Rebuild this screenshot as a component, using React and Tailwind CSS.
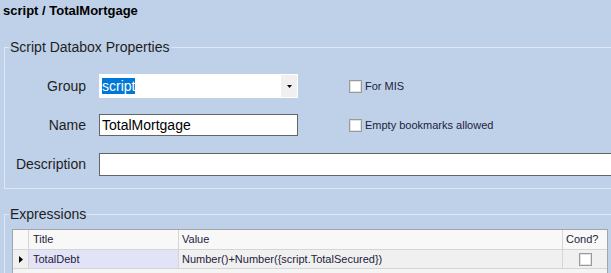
import React from 'react';

const CheckBox = () => (
    <span className="inline-block w-[13px] h-[13px] border border-[#9a9a9a] bg-white shadow-[inset_0_0_0_1px_#e2e2e2]" />
);

const App = () => {
    return (
        <div className="w-[611px] h-[273px] overflow-hidden bg-[#bfd1e9] font-['Liberation_Sans',Arial,sans-serif] text-[#1e1e1e]">
            <div className="pl-[3px] pt-[3px] text-[13px] leading-[16px] font-bold text-black">script / TotalMortgage</div>

            {/* properties group */}
            <fieldset className="mt-[20px] ml-[4px] w-[660px] border border-[#dfe7f2] pb-[12px]">
                <legend className="ml-[4px] px-[1px] text-[14px] leading-[16px]">Script Databox Properties</legend>

                <div className="mt-[19px] flex items-center h-[24px]">
                    <div className="w-[81px] text-right text-[14px]">Group</div>
                    <div className="ml-[13px] w-[199px] h-[24px] bg-white flex items-center">
                        <div className="flex-1 pl-[3px]">
                            <span className="inline-block bg-[#0078d7] text-white text-[14px] leading-[16px]">script</span>
                        </div>
                        <div className="w-[16px] h-[22px] mr-[1px] bg-[#f0f0f0] flex items-center justify-center">
                            <svg width="5" height="3" viewBox="0 0 5 3">
                                <polygon points="0,0 5,0 2.5,3" fill="#000" />
                            </svg>
                        </div>
                    </div>
                    <div className="ml-[51px] flex items-center gap-[3px] text-[11px] text-[#1c1c3c]">
                        <CheckBox />
                        <span>For MIS</span>
                    </div>
                </div>

                <div className="mt-[16px] flex items-center h-[22px]">
                    <div className="w-[81px] text-right text-[14px]">Name</div>
                    <div className="ml-[13px] w-[199px] h-[22px] bg-white border border-[#646464] pl-[2px] text-[14px] leading-[20px] text-black">
                        TotalMortgage
                    </div>
                    <div className="ml-[51px] flex items-center gap-[3px] text-[11px] text-[#1c1c3c]">
                        <CheckBox />
                        <span>Empty bookmarks allowed</span>
                    </div>
                </div>

                <div className="mt-[17px] flex items-center h-[23px]">
                    <div className="w-[81px] text-right text-[14px]">Description</div>
                    <div className="ml-[13px] flex-1 h-[23px] bg-white border border-[#646464]" />
                </div>
            </fieldset>

            {/* expressions group */}
            <fieldset className="mt-[17px] ml-[4px] w-[660px] border border-[#dfe7f2]">
                <legend className="ml-[4px] px-[1px] text-[14px] leading-[16px]">Expressions</legend>

                <div className="mt-[7px] ml-[7px] w-[596px] h-[60px] border border-[#a5a5a5] bg-[#f4f4f4] text-[11px] text-[#1c1c3c]">
                    <div className="flex h-[20px] bg-[#f8f8f8] border-b border-[#d5d5d5]">
                        <div className="w-[16px] border-r border-[#d5d5d5]" />
                        <div className="w-[150px] border-r border-[#d5d5d5] pl-[4px] leading-[19px]">Title</div>
                        <div className="w-[384px] border-r border-[#d5d5d5] pl-[3px] leading-[19px]">Value</div>
                        <div className="flex-1 pl-[3px] leading-[19px]">Cond?</div>
                    </div>
                    <div className="flex h-[19px] border-b border-[#d5d5d5]">
                        <div className="w-[16px] border-r border-[#d5d5d5] bg-[#f0f0f0] flex items-center justify-center">
                            <svg width="4" height="7" viewBox="0 0 4 7">
                                <polygon points="0,0 4,3.5 0,7" fill="#000" />
                            </svg>
                        </div>
                        <div className="w-[150px] border-r border-[#d5d5d5] bg-[#e3e3f7] pl-[4px] leading-[18px]">TotalDebt</div>
                        <div className="w-[384px] border-r border-[#d5d5d5] bg-[#f0f0f0] pl-[3px] leading-[18px]">Number()+Number({'{'}script.TotalSecured{'}'})</div>
                        <div className="flex-1 bg-[#f0f0f0] flex items-center justify-center">
                            <span className="inline-block w-[13px] h-[13px] border border-[#9a9a9a] bg-white shadow-[inset_0_0_0_1px_#e2e2e2]" />
                        </div>
                    </div>
                </div>
            </fieldset>
        </div>
    );
};

export default App;
